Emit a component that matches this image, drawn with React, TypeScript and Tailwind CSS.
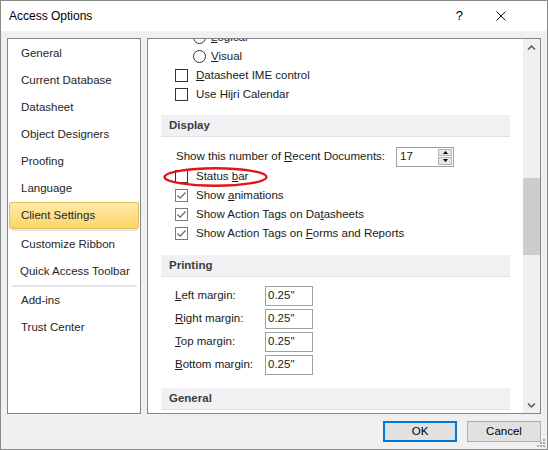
import type { ReactNode } from "react";

const navTop = [
  "General",
  "Current Database",
  "Datasheet",
  "Object Designers",
  "Proofing",
  "Language",
];

function CheckBox({ checked }: { checked?: boolean }) {
  return (
    <span
      className={
        checked
          ? "flex h-[13px] w-[13px] shrink-0 items-center justify-center border border-[#7a7a7a] bg-white"
          : "flex h-[13px] w-[13px] shrink-0 items-center justify-center border border-[#333333] bg-white"
      }
    >
      {checked && (
        <svg width="11" height="11" viewBox="0 0 11 11">
          <path d="M1.5 5.5 L4.2 8.2 L9.5 2.5" fill="none" stroke="#666666" strokeWidth="1.2" />
        </svg>
      )}
    </span>
  );
}

function CheckRow({ checked, children }: { checked?: boolean; children: ReactNode }) {
  return (
    <div className="flex h-[19px] items-center gap-[8px] pl-[27px]">
      <CheckBox checked={checked} />
      <span>{children}</span>
    </div>
  );
}

function RadioRow({ children }: { children: ReactNode }) {
  return (
    <div className="flex h-[19px] items-center gap-[5px] pl-[45px]">
      <span className="h-[13px] w-[13px] shrink-0 rounded-full border border-[#333333] bg-white" />
      <span>{children}</span>
    </div>
  );
}

function Band({ label, className }: { label: string; className: string }) {
  return (
    <div
      className={`${className} mx-[13px] flex h-[22px] items-center border-b border-[#e1e1e6] bg-[#f1f1f4] pl-[8px] font-bold text-[#3c3c3c]`}
    >
      {label}
    </div>
  );
}

function MarginRow({ k, rest }: { k: string; rest: string }) {
  return (
    <div className="flex h-[20px] items-center pl-[27px]">
      <span className="w-[90px]">
        <u>{k}</u>
        {rest}
      </span>
      <span className="flex h-[20px] w-[48px] items-center border border-[#a0a0a0] bg-white pl-[2px]">
        0.25"
      </span>
    </div>
  );
}

function Chevron({ down }: { down?: boolean }) {
  return (
    <svg width="9" height="6" viewBox="0 0 9 6">
      <path
        d={down ? "M1 1.5 L4.5 4.8 L8 1.5" : "M1 4.5 L4.5 1.2 L8 4.5"}
        fill="none"
        stroke="#606060"
        strokeWidth="1.6"
      />
    </svg>
  );
}

export default function App() {
  return (
    <div className="relative flex h-[450px] w-[548px] flex-col border border-[#8a8a8a] bg-[#f0f0f0] font-['Liberation_Sans',Arial,sans-serif] text-[11.5px] text-[#1a1a1a]">
      {/* title bar */}
      <div className="flex h-[30px] shrink-0 items-center bg-white pl-[8px] text-[12px] text-black">
        <span>Access Options</span>
        <span className="ml-auto text-[13px]">?</span>
        <svg className="ml-[33px] mr-[41px]" width="10" height="10" viewBox="0 0 10 10">
          <path d="M0.5 0.5 L9.5 9.5 M9.5 0.5 L0.5 9.5" stroke="#111" strokeWidth="1" />
        </svg>
      </div>

      <div className="flex flex-1 flex-col px-[6px] pt-[7px]">
        <div className="flex h-[376px] gap-[6px]">
          {/* left navigation */}
          <div className="flex w-[134px] flex-col border border-[#828790] bg-white pt-[1px] text-[#262626]">
            {navTop.map((n) => (
              <div key={n} className="flex h-[27px] items-center pl-[13px] pt-[1px]">
                {n}
              </div>
            ))}
            <div className="mx-[1px] flex h-[27px] items-center rounded-[2px] border border-[#e2bd5c] bg-gradient-to-b from-[#fdeaa9] to-[#fbd565] pl-[11px] pt-[1px]">
              Client Settings
            </div>
            <div className="ml-[4px] mr-[3px] h-[2px] bg-[#e4e4ea]" />
            <div className="flex h-[27px] items-center pl-[13px] pt-[1px]">Customize Ribbon</div>
            <div className="flex h-[27px] items-center pl-[12px] pt-[1px]">Quick Access Toolbar</div>
            <div className="ml-[4px] mr-[3px] h-[2px] bg-[#e4e4ea]" />
            <div className="flex h-[27px] items-center pl-[13px] pt-[1px]">Add-ins</div>
            <div className="flex h-[27px] items-center pl-[13px] pt-[1px]">Trust Center</div>
          </div>

          {/* options pane */}
          <div className="flex w-[394px] border border-[#828790] bg-white">
            <div className="flex-1 overflow-hidden">
              <div className="-mt-[11px] flex flex-col">
                <RadioRow>
                  <u>L</u>ogical
                </RadioRow>
                <RadioRow>
                  <u>V</u>isual
                </RadioRow>
                <CheckRow>
                  <u>D</u>atasheet IME control
                </CheckRow>
                <CheckRow>
                  Use Hi<u>j</u>ri Calendar
                </CheckRow>

                <Band label="Display" className="mt-[11px]" />
                <div className="mt-[9px] flex h-[21px] items-center pl-[28px]">
                  <span className="w-[220px]">
                    Show this number of <u>R</u>ecent Documents:
                  </span>
                  <span className="flex h-[20px] w-[58px] border border-[#a0a0a0] bg-white">
                    <span className="flex flex-1 items-center pl-[3px]">17</span>
                    <span className="flex w-[16px] flex-col gap-[1px] p-[1px]">
                      <span className="flex flex-1 items-center justify-center border border-[#b4b4b4] bg-[#e6e6e6]">
                        <svg width="5" height="3" viewBox="0 0 5 3">
                          <path d="M0 3 L2.5 0 L5 3 Z" fill="#000" />
                        </svg>
                      </span>
                      <span className="flex flex-1 items-center justify-center border border-[#b4b4b4] bg-[#e6e6e6]">
                        <svg width="5" height="3" viewBox="0 0 5 3">
                          <path d="M0 0 L2.5 3 L5 0 Z" fill="#000" />
                        </svg>
                      </span>
                    </span>
                  </span>
                </div>
                <div className="relative">
                  <CheckRow>
                    Status <u>b</u>ar
                  </CheckRow>
                  <svg
                    className="absolute left-[15px] top-[0px]"
                    width="105"
                    height="20"
                    viewBox="0 0 105 20"
                  >
                    <ellipse cx="52.5" cy="10" rx="51" ry="8.7" fill="none" stroke="#e3141b" strokeWidth="2.4" />
                  </svg>
                </div>
                <CheckRow checked>
                  Show <u>a</u>nimations
                </CheckRow>
                <CheckRow checked>
                  Show Action Tags on Da<u>t</u>asheets
                </CheckRow>
                <CheckRow checked>
                  Show Action Tags on <u>F</u>orms and Reports
                </CheckRow>

                <Band label="Printing" className="mt-[12px]" />
                <div className="mt-[9px] flex flex-col gap-[3px]">
                  <MarginRow k="L" rest="eft margin:" />
                  <MarginRow k="R" rest="ight margin:" />
                  <MarginRow k="T" rest="op margin:" />
                  <MarginRow k="B" rest="ottom margin:" />
                </div>

                <Band label="General" className="mt-[13px]" />
              </div>
            </div>

            {/* scrollbar */}
            <div className="flex w-[17px] flex-col bg-[#f0f0f0]">
              <div className="flex h-[17px] items-center justify-center">
                <Chevron />
              </div>
              <div className="flex-1">
                <div className="mt-[122px] h-[77px] bg-[#cdcdcd]" />
              </div>
              <div className="flex h-[17px] items-center justify-center">
                <Chevron down />
              </div>
            </div>
          </div>
        </div>

        {/* buttons */}
        <div className="mt-[7px] flex justify-end gap-[10px] text-black">
          <button className="flex h-[21px] w-[74px] items-center justify-center border-2 border-[#0078d7] bg-[#e1e1e1]">
            OK
          </button>
          <button className="flex h-[21px] w-[74px] items-center justify-center border border-[#adadad] bg-[#e1e1e1]">
            Cancel
          </button>
        </div>
      </div>

      {/* size grip */}
      <svg className="absolute bottom-[1px] right-[1px]" width="10" height="10" viewBox="0 0 10 10">
        <g fill="#a8a8a8">
          <rect x="7" y="1" width="2" height="2" />
          <rect x="4" y="4" width="2" height="2" />
          <rect x="7" y="4" width="2" height="2" />
          <rect x="1" y="7" width="2" height="2" />
          <rect x="4" y="7" width="2" height="2" />
          <rect x="7" y="7" width="2" height="2" />
        </g>
      </svg>
    </div>
  );
}
